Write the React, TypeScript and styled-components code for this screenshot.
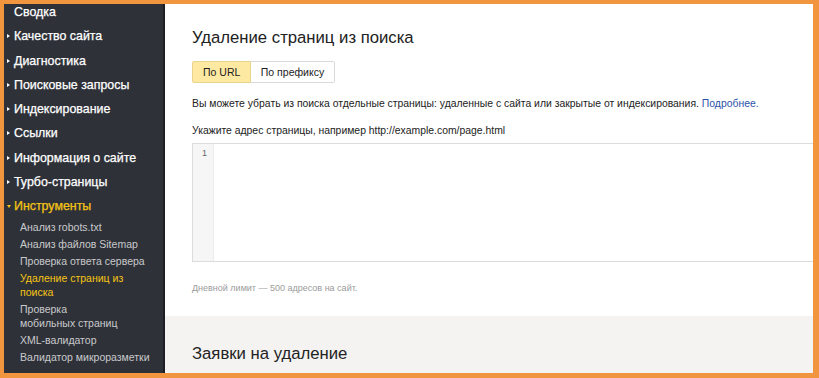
import React from "react";
import styled, { createGlobalStyle } from "styled-components";

const Global = createGlobalStyle`
  html, body { margin: 0; padding: 0; }
  body { font-family: "Liberation Sans", Arial, sans-serif; }
`;

const Page = styled.div`
  width: 819px;
  height: 378px;
  box-sizing: border-box;
  background: #f2953f;
  padding: 4px 6px 5px 4px;
`;

const Frame = styled.div`
  display: flex;
  height: 100%;
  overflow: hidden;
  background: #fff;
`;

const Sidebar = styled.nav`
  flex: 0 0 159px;
  background: #2e3138;
  border-right: 2px solid #1d1f24;
  overflow: hidden;
`;

const Menu = styled.ul`
  list-style: none;
  margin: -4px 0 0;
  padding: 0;
`;

const TopItem = styled.li<{ $active?: boolean; $open?: boolean; $noArrow?: boolean }>`
  position: relative;
  height: 24.25px;
  line-height: 24.25px;
  padding-left: 10px;
  font-size: 12.4px;
  -webkit-text-stroke: 0.25px currentColor;
  color: ${(p) => (p.$active ? "#f6c515" : "#fff")};
  white-space: nowrap;
  &::before {
    content: "";
    display: ${(p) => (p.$noArrow ? "none" : "block")};
    position: absolute;
    left: 3px;
    top: ${(p) => (p.$open ? "11px" : "10px")};
    border-style: solid;
    border-color: transparent;
    ${(p) =>
      p.$open
        ? `border-width: 3px 2.5px 0 2.5px; border-top-color: #f6c515;`
        : `border-width: 2.5px 0 2.5px 3px; border-left-color: #fff;`}
  }
`;

const SubItem = styled.li<{ $active?: boolean }>`
  padding: 1.5px 4px 1.5px 16px;
  font-size: 10.5px;
  line-height: 14px;
  color: ${(p) => (p.$active ? "#f6c515" : "#c9cacc")};
`;

const Main = styled.main`
  flex: 1;
  min-width: 0;
  display: flex;
  flex-direction: column;
`;

const TopSection = styled.section`
  background: #fff;
  padding: 0 0 21px 27px;
`;

const Title = styled.h1`
  margin: 22px 0 0;
  font-size: 16.7px;
  line-height: 24px;
  font-weight: normal;
  color: #222;
`;

const Tabs = styled.div`
  display: inline-flex;
  margin-top: 11px;
  height: 22px;
`;

const Tab = styled.button<{ $active?: boolean }>`
  font-family: inherit;
  font-size: 10.5px;
  height: 22px;
  padding: 0 ${(p) => (p.$active ? "10px" : "9.5px")};
  margin: 0;
  color: #222;
  background: ${(p) => (p.$active ? "#fde9a1" : "#fff")};
  border: 1px solid ${(p) => (p.$active ? "#e9d48a" : "#d9d9d9")};
  border-radius: ${(p) => (p.$active ? "2px 0 0 2px" : "0 2px 2px 0")};
  & + & { border-left: none; }
  cursor: pointer;
`;

const Text = styled.p<{ $mt: number }>`
  margin: ${(p) => p.$mt}px 0 0;
  font-size: 10.4px;
  line-height: 16px;
  color: #222;
  white-space: nowrap;
`;

const Link = styled.a`
  color: #2e52a8;
  text-decoration: none;
`;

const Editor = styled.div`
  display: flex;
  margin-top: 4px;
  margin-right: -10px;
  height: 119px;
  box-sizing: border-box;
  border: 1px solid #dcdcdc;
`;

const Gutter = styled.div`
  width: 21px;
  background: #f6f6f6;
  border-right: 1px solid #ececec;
  font-size: 9px;
  color: #666;
  text-align: right;
  padding: 4px 6px 0 0;
  box-sizing: border-box;
`;

const Hint = styled.p`
  margin: 19px 0 0;
  font-size: 9px;
  line-height: 14px;
  color: #9b9b9b;
`;

const BottomSection = styled.section`
  flex: 1;
  background: #f4f3f1;
  padding: 26px 0 0 27px;
`;

const SubTitle = styled.h2`
  margin: 0;
  font-size: 16.7px;
  line-height: 24px;
  font-weight: normal;
  color: #222;
`;

const top = [
  "Качество сайта",
  "Диагностика",
  "Поисковые запросы",
  "Индексирование",
  "Ссылки",
  "Информация о сайте",
  "Турбо-страницы",
];

const subs: { t: React.ReactNode; a?: boolean }[] = [
  { t: "Анализ robots.txt" },
  { t: "Анализ файлов Sitemap" },
  { t: "Проверка ответа сервера" },
  { t: <>Удаление страниц из<br />поиска</>, a: true },
  { t: <>Проверка<br />мобильных страниц</> },
  { t: "XML-валидатор" },
  { t: "Валидатор микроразметки" },
];

export default function App() {
  return (
    <>
      <Global />
      <Page>
        <Frame>
          <Sidebar>
            <Menu>
              <TopItem $noArrow>Сводка</TopItem>
              {top.map((t) => (
                <TopItem key={t}>{t}</TopItem>
              ))}
              <TopItem $active $open>Инструменты</TopItem>
              {subs.map((s, i) => (
                <SubItem key={i} $active={s.a}>{s.t}</SubItem>
              ))}
            </Menu>
          </Sidebar>
          <Main>
            <TopSection>
              <Title>Удаление страниц из поиска</Title>
              <Tabs>
                <Tab $active>По URL</Tab>
                <Tab>По префиксу</Tab>
              </Tabs>
              <Text $mt={13}>
                Вы можете убрать из поиска отдельные страницы: удаленные с сайта или закрытые от индексирования.{" "}
                <Link href="#">Подробнее.</Link>
              </Text>
              <Text $mt={11}>Укажите адрес страницы, например http://example.com/page.html</Text>
              <Editor>
                <Gutter>1</Gutter>
              </Editor>
              <Hint>Дневной лимит — 500 адресов на сайт.</Hint>
            </TopSection>
            <BottomSection>
              <SubTitle>Заявки на удаление</SubTitle>
            </BottomSection>
          </Main>
        </Frame>
      </Page>
    </>
  );
}
